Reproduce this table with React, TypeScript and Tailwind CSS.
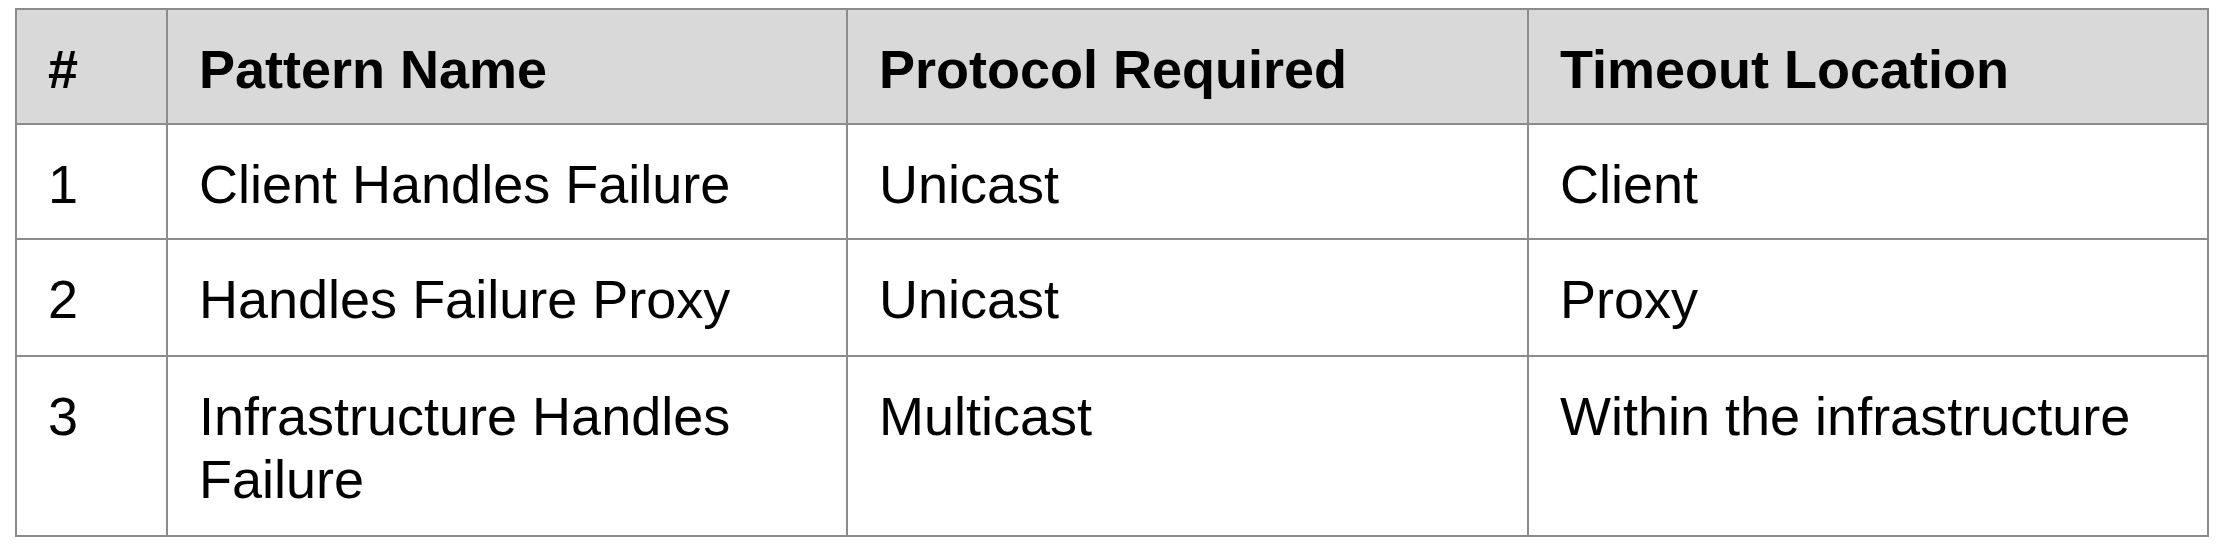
import React from 'react';

interface PatternRow {
  id: number;
  name: string;
  protocol: string;
  timeout: string;
}

const rows: PatternRow[] = [
  { id: 1, name: 'Client Handles Failure', protocol: 'Unicast', timeout: 'Client' },
  { id: 2, name: 'Handles Failure Proxy', protocol: 'Unicast', timeout: 'Proxy' },
  { id: 3, name: 'Infrastructure Handles Failure', protocol: 'Multicast', timeout: 'Within the infrastructure' },
];

const headers = ['#', 'Pattern Name', 'Protocol Required', 'Timeout Location'];

const cell = 'border-2 border-[#8c8c8c] align-top pl-[31px] pr-4 pt-[28px] pb-0';

const App: React.FC = () => {
  return (
    <div className="w-[2221px] h-[548px] bg-white pl-[15px] pt-[8px] font-['Liberation_Sans',Arial,sans-serif] text-[54px] leading-[63px] text-black">
      <table className="w-[2192px] table-fixed border-collapse">
        <colgroup>
          <col className="w-[151px]" />
          <col className="w-[680px]" />
          <col className="w-[681px]" />
          <col className="w-[680px]" />
        </colgroup>
        <thead>
          <tr className="h-[115px] bg-[#d9d9d9]">
            {headers.map(h => (
              <th key={h} className={`${cell} text-left font-bold`}>{h}</th>
            ))}
          </tr>
        </thead>
        <tbody>
          {rows.map(row => (
            <tr key={row.id} className={row.id === 3 ? 'h-[180px]' : row.id === 2 ? 'h-[117px]' : 'h-[115px]'}>
              <td className={cell}>{row.id}</td>
              <td className={cell}>{row.name}</td>
              <td className={cell}>{row.protocol}</td>
              <td className={cell}>{row.timeout}</td>
            </tr>
          ))}
        </tbody>
      </table>
    </div>
  );
};

export default App;
